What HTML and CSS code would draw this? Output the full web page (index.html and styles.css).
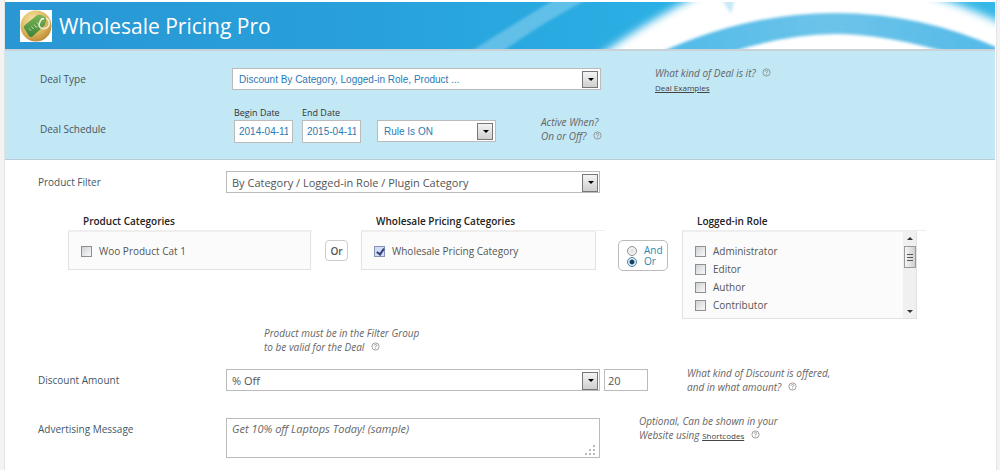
FILE: index.html
```html
<!DOCTYPE html>
<html lang="en">
<head>
    <meta charset="UTF-8">
    <meta name="viewport" content="width=device-width, initial-scale=1.0">
    <title>Wholesale Pricing Pro</title>
    <link rel="stylesheet" href="styles.css">
</head>
<body>
    <svg class="defs" aria-hidden="true">
        <symbol id="help" viewBox="0 0 9 9">
            <circle cx="4.5" cy="4.5" r="3.6" fill="none" stroke="currentColor" stroke-width=".8"/>
            <path d="M3.2 3.6Q3.3 2.5 4.5 2.5T5.7 3.6Q5.7 4.3 4.5 4.7V5.4M4.5 6.1V6.8" fill="none" stroke="currentColor" stroke-width=".8"/>
        </symbol>
    </svg>

    <div class="panel">
        <header class="banner">
            <svg class="swoosh" viewBox="0 0 550 47" preserveAspectRatio="xMaxYMid slice" aria-hidden="true">
                <defs>
                    <filter id="soft" x="-10%" y="-50%" width="120%" height="200%">
                        <feGaussianBlur stdDeviation="4"/>
                    </filter>
                    <filter id="edge" x="-10%" y="-50%" width="120%" height="200%">
                        <feGaussianBlur stdDeviation="1.6"/>
                    </filter>
                    <linearGradient id="arc" x1="0" x2="1">
                        <stop offset="0" stop-color="#4fbae8"/>
                        <stop offset=".5" stop-color="#6cc3e9"/>
                        <stop offset="1" stop-color="#52b9e7"/>
                    </linearGradient>
                </defs>
                <path d="M22 52Q75 18 112 -4H145Q98 20 54 52Z" fill="#a5dcf3" opacity=".45" filter="url(#edge)"/>
                <path d="M140 64Q205 16 268 -14H460Q520 2 570 28V64Z" fill="#fff" filter="url(#soft)"/>
                <path d="M212 52Q300 11 390 11T562 50V62H212Z" fill="url(#arc)" filter="url(#edge)"/>
                <path d="M280 52Q340 32 390 32T508 52V62H280Z" fill="#fff" filter="url(#edge)"/>
                <path d="M276 -4L286 12L290 -4Z" fill="#8fd3f0" opacity=".5" filter="url(#edge)"/>
            </svg>
            <svg class="logo" viewBox="0 0 32 32" aria-hidden="true">
                <defs>
                    <radialGradient id="gold" cx=".4" cy=".3" r=".75">
                        <stop offset="0" stop-color="#f6e3a6"/>
                        <stop offset=".6" stop-color="#dcb75c"/>
                        <stop offset="1" stop-color="#b98536"/>
                    </radialGradient>
                    <linearGradient id="tag" x1="0" y1="0" x2="0" y2="1">
                        <stop offset="0" stop-color="#7db558"/>
                        <stop offset="1" stop-color="#3a8338"/>
                    </linearGradient>
                </defs>
                <rect width="32" height="32" fill="#fff"/>
                <circle cx="16" cy="16" r="15.5" fill="url(#gold)"/>
                <path d="M4 18Q3 17 5 15L16 6Q18 4 21 5L25 7Q27 8 26 11L25 15L13 26Q11 28 9 26Z" fill="url(#tag)"/>
                <path d="M9 18.5l1.8 2.2M11.5 16.5l2 2.5M14 14.500l2 2.500h1.500M17 12.500l2 2.500" fill="none" stroke="#cfe8bd" stroke-width=".9"/>
                <path d="M21 10Q17 16 21 18Q27 20 29 15Q30 10 26 8" fill="none" stroke="#f0ead0" stroke-width="1.6"/>
                <path d="M21 10Q22 8 24 9" fill="none" stroke="#fff" stroke-width="1.6"/>
            </svg>
            <h1>Wholesale Pricing Pro</h1>
        </header>

        <form>
            <section class="deal">
                <div class="row">
                    <label class="name" for="dealType">Deal Type</label>
                    <div class="select wide">
                        <select id="dealType"><option>Discount By Category, Logged-in Role, Product ...</option></select>
                    </div>
                    <p class="note type-note">What kind of Deal is it? <svg class="help"><use href="#help"/></svg><br><a href="#">Deal Examples</a></p>
                </div>
                <div class="row schedule">
                    <span class="name">Deal Schedule</span>
                    <div class="dates">
                        <div class="date">
                            <label for="beginDate">Begin Date</label>
                            <input type="text" id="beginDate" value="2014-04-11">
                        </div>
                        <div class="date">
                            <label for="endDate">End Date</label>
                            <input type="text" id="endDate" value="2015-04-11">
                        </div>
                        <div class="select rule">
                            <select aria-label="Rule status"><option>Rule Is ON</option></select>
                        </div>
                    </div>
                    <p class="note active-note">Active When?<br>On or Off? <svg class="help"><use href="#help"/></svg></p>
                </div>
            </section>

            <section class="details">
                <div class="row">
                    <label class="name" for="filter">Product Filter</label>
                    <div class="select wide">
                        <select id="filter"><option>By Category / Logged-in Role / Plugin Category</option></select>
                    </div>
                </div>

                <div class="groups">
                    <fieldset class="group first">
                        <legend>Product Categories</legend>
                        <div class="box">
                            <label><input type="checkbox">Woo Product Cat 1</label>
                        </div>
                    </fieldset>
                    <button type="button" class="or">Or</button>
                    <fieldset class="group">
                        <legend>Wholesale Pricing Categories</legend>
                        <div class="box">
                            <label><input type="checkbox" checked>Wholesale Pricing Category</label>
                        </div>
                    </fieldset>
                    <div class="and-or">
                        <label><input type="radio" name="andOr">And</label>
                        <label><input type="radio" name="andOr" checked>Or</label>
                    </div>
                    <fieldset class="group">
                        <legend>Logged-in Role</legend>
                        <div class="box roles">
                            <div class="list">
                                <label><input type="checkbox">Administrator</label>
                                <label><input type="checkbox">Editor</label>
                                <label><input type="checkbox">Author</label>
                                <label><input type="checkbox">Contributor</label>
                            </div>
                            <div class="scrollbar">
                                <span class="up"></span>
                                <span class="thumb"></span>
                                <span class="down"></span>
                            </div>
                        </div>
                    </fieldset>
                </div>

                <p class="note filter-note">Product must be in the Filter Group<br>to be valid for the Deal <svg class="help"><use href="#help"/></svg></p>

                <div class="row">
                    <label class="name" for="discount">Discount Amount</label>
                    <div class="select wide">
                        <select id="discount"><option>% Off</option></select>
                    </div>
                    <input type="text" class="amount" value="20" aria-label="Amount">
                    <p class="note discount-note">What kind of Discount is offered,<br>and in what amount? <svg class="help"><use href="#help"/></svg></p>
                </div>

                <div class="row message">
                    <label class="name" for="message">Advertising Message</label>
                    <div class="textarea wide">
                        <textarea id="message">Get 10% off Laptops Today! (sample)</textarea>
                        <svg class="grip" viewBox="0 0 10 10" aria-hidden="true">
                            <path d="M0 8h2v2H0zM4 8h2v2H4zM8 8h2v2H8zM4 4h2v2H4zM8 4h2v2H8zM8 0h2v2H8z"/>
                        </svg>
                    </div>
                    <p class="note message-note">Optional, Can be shown in your<br>Website using <a href="#">Shortcodes</a> <svg class="help"><use href="#help"/></svg></p>
                </div>
            </section>
        </form>
    </div>
</body>
</html>
```

FILE: styles.css
```css
* {
    box-sizing: border-box;
}
html {
    background-color: #f3f3f3;
}
body {
    margin: 0;
    font-family: "Open Sans", "Noto Sans", sans-serif;
    font-size: 10px;
    color: #555;
}
h1, p, fieldset {
    margin: 0;
}
.defs {
    display: none;
}
.panel {
    min-height: 100vh;
    margin: 0 3px 0 4px;
    padding: 2px 1px 0 0;
    background-color: #fff;
    border: solid #e3e3e3;
    border-width: 0 1px;
}

/* banner */
.banner {
    position: relative;
    display: flex;
    align-items: center;
    height: 49px;
    padding-left: 15px;
    background: linear-gradient(to right, #2997d3, #28a0da 35%, #2bb1e5 70%, #36b7e8);
    border-bottom: 2px solid #c9d2d8;
}
.swoosh {
    position: absolute;
    top: 0;
    right: 0;
    width: 550px;
    height: 47px;
}
.logo {
    width: 32px;
    height: 32px;
}
h1 {
    margin-left: 7px;
    font-size: 21px;
    font-weight: 400;
    line-height: 28px;
    color: #fff;
}

/* rows */
.row {
    display: flex;
    align-items: flex-start;
}
.name {
    flex: none;
    line-height: 22px;
}
.deal {
    height: 109px;
    padding: 17px 0 0 35px;
    background-color: #c2e7f5;
    border-bottom: 1px solid #b9cbd4;
}
.deal .name {
    width: 192px;
    color: #46545e;
}
.details {
    padding: 11px 0 0 33px;
}
.details .name {
    width: 188px;
    color: #3f5767;
}

/* selects */
.select {
    position: relative;
    height: 22px;
}
.select.wide, .textarea.wide {
    flex: 0 1 374px;
}
.deal .select.wide {
    flex-basis: 369px;
}
.select select {
    appearance: none;
    width: 100%;
    height: 22px;
    padding: 0 24px 0 5px;
    border: 1px solid #bbb;
    border-radius: 0;
    background-color: #fff;
    font-family: inherit;
    font-size: 11px;
    color: #555;
}
.deal .select select {
    padding-left: 6px;
    font-family: "Liberation Sans", Arial, sans-serif;
    font-size: 10px;
    color: #2a7ab5;
}
.select::before {
    content: "";
    position: absolute;
    top: 3px;
    right: 2px;
    width: 14px;
    height: 16px;
    border: 1px solid #777;
    background: linear-gradient(#f4f4f4, #cfcfcf);
    pointer-events: none;
}
.select::after {
    content: "";
    position: absolute;
    top: 10px;
    right: 6px;
    border: 3px solid transparent;
    border-top: 3px solid #000;
    border-bottom: 0;
    pointer-events: none;
}
.deal .select::before {
    right: 3px;
    height: 15px;
}
.deal .select::after {
    right: 7px;
}

/* schedule */
.schedule {
    margin-top: 11px;
}
.schedule .name {
    margin-top: 12px;
}
.dates {
    display: flex;
    align-items: flex-end;
    gap: 9px;
    padding-left: 2px;
}
.date {
    width: 59px;
}
.date label {
    display: block;
    font-size: 9px;
    line-height: 14px;
    color: #333;
    white-space: nowrap;
}
.date input {
    display: block;
    width: 100%;
    height: 23px;
    padding: 0 4px;
    border: 1px solid #bbb;
    font-family: "Liberation Sans", Arial, sans-serif;
    font-size: 10px;
    color: #2a7ab5;
}
.select.rule {
    width: 119px;
    margin: 0 0 1px 7px;
}

/* notes */
.note {
    font-size: 10px;
    font-style: italic;
    line-height: 14px;
    color: #666;
    white-space: nowrap;
}
.note a {
    font-size: 8px;
    font-style: normal;
    color: #444;
}
.help {
    width: 9px;
    height: 9px;
    margin-left: 4px;
    color: #888;
}
.type-note {
    margin: -2px 0 0 54px;
}
.active-note {
    margin: 9px 0 0 45px;
}
.filter-note {
    margin: 7px 0 15px 226px;
}
.discount-note {
    margin: -3px 0 0 39px;
}
.message-note {
    margin: -4px 0 0 39px;
}

/* filter groups */
.groups {
    display: flex;
    align-items: flex-start;
    margin: 18px 0 0 30px;
}
.group {
    min-width: 0;
    width: 244px;
    padding: 0;
    border: 0;
}
.group legend {
    width: 100%;
    height: 20px;
    padding: 0 0 0 15px;
    border-bottom: 1px solid #eee;
    font-size: 10px;
    font-weight: 600;
    line-height: 20px;
    color: #222;
}
.box {
    width: 235px;
    padding: 10px 12px 9px 12px;
    border: 1px solid #e2e2e2;
    border-top-color: #eee;
    background-color: #fbfbfb;
}
.first .box {
    width: 243px;
}
.box label {
    display: flex;
    align-items: center;
    height: 18px;
    font-size: 10px;
    color: #555;
}
.box input {
    appearance: none;
    width: 11px;
    height: 11px;
    margin: 0 7px 0 0;
    border: 1px solid #8e8f8f;
    background: linear-gradient(135deg, #cfd3d6, #f8f8f8);
}
.box input:checked {
    border-color: #8592b5;
    background: #d3dcf2;
}
.box input:checked::before {
    content: "";
    display: block;
    width: 3px;
    height: 6px;
    margin: 0 0 0 3px;
    border: solid #34427c;
    border-width: 0 2px 2px 0;
    transform: rotate(35deg);
}
.or {
    width: 23px;
    height: 21px;
    margin: 29px 13px 0 13px;
    padding: 0;
    border: 1px solid #ccc;
    border-radius: 4px;
    background-color: #fff;
    font-family: inherit;
    font-size: 10px;
    font-weight: 600;
    color: #555;
}
.and-or {
    width: 50px;
    height: 31px;
    margin: 29px 14px 0 13px;
    padding: 4px 0 0 8px;
    border: 1px solid #bbb;
    border-radius: 5px;
}
.and-or label {
    display: flex;
    align-items: center;
    height: 11px;
    font-size: 10px;
    line-height: 11px;
    color: #2d86b0;
}
.and-or input {
    appearance: none;
    width: 10px;
    height: 10px;
    margin: 0 7px 0 0;
    border: 1px solid #8e8f8f;
    border-radius: 50%;
    background: radial-gradient(#e0e0e0, #fff);
}
.and-or input:checked {
    border-color: #5586a3;
    background: radial-gradient(circle, #173f63 35%, #cfe6f5 50%);
}
.roles {
    display: flex;
    justify-content: space-between;
    height: 88px;
    padding: 0 0 0 12px;
}
.list {
    padding-top: 10px;
    overflow: hidden;
}
.scrollbar {
    display: flex;
    flex-direction: column;
    align-items: center;
    width: 13px;
    padding: 5px 0;
    background-color: #f0f0f0;
}
.up, .down {
    border: 3px solid transparent;
}
.up {
    border-top: 0;
    border-bottom-color: #333;
}
.down {
    margin-top: auto;
    border-bottom: 0;
    border-top-color: #333;
}
.thumb {
    display: flex;
    align-items: center;
    justify-content: center;
    width: 12px;
    height: 22px;
    margin-top: 6px;
    border: 1px solid #999;
    background: linear-gradient(to right, #f5f5f5, #cfcfcf);
}
.thumb::before {
    content: "";
    width: 6px;
    height: 7px;
    background: repeating-linear-gradient(#555 0 1px, transparent 1px 3px);
}

/* amount and message */
.amount {
    width: 44px;
    height: 22px;
    margin-left: 4px;
    padding: 0 3px;
    border: 1px solid #bbb;
    font-family: inherit;
    font-size: 11px;
    color: #555;
}
.message {
    margin-top: 24px;
}
.textarea {
    position: relative;
}
.textarea textarea {
    display: block;
    width: 100%;
    height: 40px;
    padding: 1px 5px;
    border: 1px solid #bbb;
    font-family: inherit;
    font-size: 11px;
    font-style: italic;
    line-height: 18px;
    color: #666;
    resize: none;
}
.grip {
    position: absolute;
    right: 5px;
    bottom: 3px;
    width: 10px;
    height: 10px;
    fill: #bbb;
}
```
